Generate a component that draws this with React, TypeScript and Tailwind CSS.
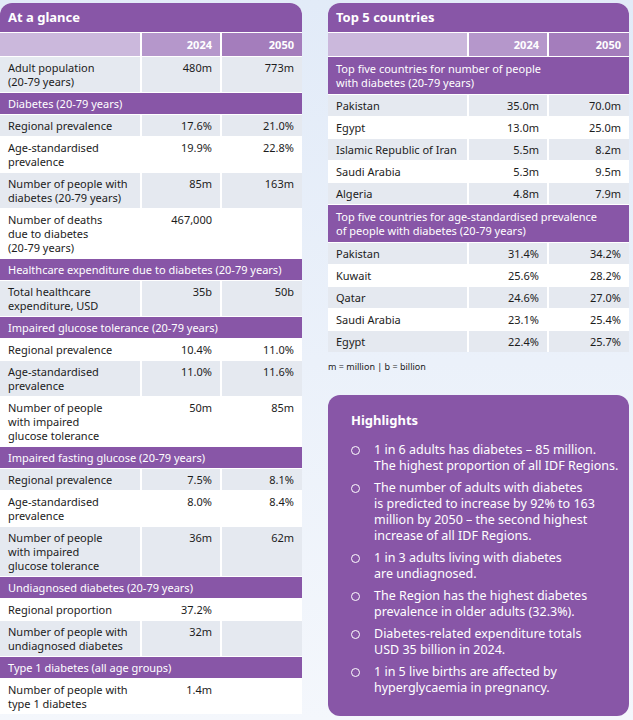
import React from 'react'

type Row = { label: string[]; a?: string; b?: string; shade: boolean }
type Block = { title: string[]; rows: Row[] }

const glance: { top: Row; blocks: Block[] } = {
  top: { label: ['Adult population', '(20-79 years)'], a: '480m', b: '773m', shade: true },
  blocks: [
    {
      title: ['Diabetes (20-79 years)'],
      rows: [
        { label: ['Regional prevalence'], a: '17.6%', b: '21.0%', shade: true },
        { label: ['Age-standardised', 'prevalence'], a: '19.9%', b: '22.8%', shade: false },
        { label: ['Number of people with', 'diabetes (20-79 years)'], a: '85m', b: '163m', shade: true },
        { label: ['Number of deaths', 'due to diabetes', '(20-79 years)'], a: '467,000', shade: false },
      ],
    },
    {
      title: ['Healthcare expenditure due to diabetes (20-79 years)'],
      rows: [{ label: ['Total healthcare', 'expenditure, USD'], a: '35b', b: '50b', shade: true }],
    },
    {
      title: ['Impaired glucose tolerance (20-79 years)'],
      rows: [
        { label: ['Regional prevalence'], a: '10.4%', b: '11.0%', shade: false },
        { label: ['Age-standardised', 'prevalence'], a: '11.0%', b: '11.6%', shade: true },
        { label: ['Number of people', 'with impaired', 'glucose tolerance'], a: '50m', b: '85m', shade: false },
      ],
    },
    {
      title: ['Impaired fasting glucose (20-79 years)'],
      rows: [
        { label: ['Regional prevalence'], a: '7.5%', b: '8.1%', shade: true },
        { label: ['Age-standardised', 'prevalence'], a: '8.0%', b: '8.4%', shade: false },
        { label: ['Number of people', 'with impaired', 'glucose tolerance'], a: '36m', b: '62m', shade: true },
      ],
    },
    {
      title: ['Undiagnosed diabetes (20-79 years)'],
      rows: [
        { label: ['Regional proportion'], a: '37.2%', shade: false },
        { label: ['Number of people with', 'undiagnosed diabetes'], a: '32m', shade: true },
      ],
    },
    {
      title: ['Type 1 diabetes (all age groups)'],
      rows: [{ label: ['Number of people with', 'type 1 diabetes'], a: '1.4m', shade: false }],
    },
  ],
}

const countries: Block[] = [
  {
    title: ['Top five countries for number of people', 'with diabetes (20-79 years)'],
    rows: [
      { label: ['Pakistan'], a: '35.0m', b: '70.0m', shade: true },
      { label: ['Egypt'], a: '13.0m', b: '25.0m', shade: false },
      { label: ['Islamic Republic of Iran'], a: '5.5m', b: '8.2m', shade: true },
      { label: ['Saudi Arabia'], a: '5.3m', b: '9.5m', shade: false },
      { label: ['Algeria'], a: '4.8m', b: '7.9m', shade: true },
    ],
  },
  {
    title: ['Top five countries for age-standardised prevalence', 'of people with diabetes (20-79 years)'],
    rows: [
      { label: ['Pakistan'], a: '31.4%', b: '34.2%', shade: true },
      { label: ['Kuwait'], a: '25.6%', b: '28.2%', shade: false },
      { label: ['Qatar'], a: '24.6%', b: '27.0%', shade: true },
      { label: ['Saudi Arabia'], a: '23.1%', b: '25.4%', shade: false },
      { label: ['Egypt'], a: '22.4%', b: '25.7%', shade: true },
    ],
  },
]

const highlights = [
  ['1 in 6 adults has diabetes – 85 million.', 'The highest proportion of all IDF Regions.'],
  [
    'The number of adults with diabetes',
    'is predicted to increase by 92% to 163',
    'million by 2050 – the second highest',
    'increase of all IDF Regions.',
  ],
  ['1 in 3 adults living with diabetes', 'are undiagnosed.'],
  ['The Region has the highest diabetes', 'prevalence in older adults (32.3%).'],
  ['Diabetes-related expenditure totals', 'USD 35 billion in 2024.'],
  ['1 in 5 live births are affected by', 'hyperglycaemia in pregnancy.'],
]

function Lines({ lines }: { lines: string[] }) {
  return (
    <>
      {lines.map((l, i) => (
        <div key={i} className="whitespace-nowrap">
          {l}
        </div>
      ))}
    </>
  )
}

function DataRow({ row, cols }: { row: Row; cols: string }) {
  const bg = row.shade ? 'bg-[#e5e9f0]' : 'bg-white'
  return (
    <div className={`grid ${cols} gap-x-[2px] mt-[1px]`}>
      <div className={`${bg} px-2 pt-[4px] pb-[3px]`}>
        <Lines lines={row.label} />
      </div>
      <div className={`${bg} px-2 pt-[4px] pb-[3px] text-right`}>{row.a}</div>
      <div className={`${bg} px-2 pt-[4px] pb-[3px] text-right`}>{row.b}</div>
    </div>
  )
}

function SectionTitle({ lines }: { lines: string[] }) {
  // two-line titles sit in a slightly taller band
  const pad = lines.length > 1 ? 'pt-[5px] pb-[4px]' : 'pt-[4px] pb-[3px]'
  return (
    <div className={`bg-[#8856a7] text-white px-2 ${pad} mt-[1px]`}>
      <Lines lines={lines} />
    </div>
  )
}

function Panel({ title, cols, children }: { title: string; cols: string; children: React.ReactNode }) {
  return (
    <div className="bg-white rounded-t-[12px] overflow-hidden shrink-0">
      <div className="bg-[#8856a7] text-white font-bold text-[13px] leading-[18px] px-2 pt-[5px] pb-[6px]">
        {title}
      </div>
      <div className={`grid ${cols} gap-x-[2px] mt-[1px] font-bold text-white`}>
        <div className="bg-[#cbb8dc] h-[23px]" />
        <div className="bg-[#b597cb] px-2 text-right leading-[23px]">2024</div>
        <div className="bg-[#a47dbc] px-2 text-right leading-[23px]">2050</div>
      </div>
      {children}
    </div>
  )
}

export default function App() {
  const leftCols = 'grid-cols-[140px_78px_80px]'
  const rightCols = 'grid-cols-[139px_78px_80px]'
  return (
    <div
      className="w-[633px] h-[720px] overflow-hidden bg-gradient-to-b from-[#e2ebf8] to-[#f4f7fc] flex items-start gap-[26px] pt-[3px] text-[11px] leading-[14px] text-[#1c1c1c]"
      style={{ fontFamily: '"Noto Sans", "Open Sans", sans-serif' }}
    >
      {/* At a glance */}
      <div className="w-[302px] shrink-0">
        <Panel title="At a glance" cols={leftCols}>
          <DataRow row={glance.top} cols={leftCols} />
          {glance.blocks.map((b, i) => (
            <div key={i}>
              <SectionTitle lines={b.title} />
              {b.rows.map((r, j) => (
                <DataRow key={j} row={r} cols={leftCols} />
              ))}
            </div>
          ))}
        </Panel>
      </div>

      {/* Right column */}
      <div className="w-[301px] shrink-0 flex flex-col">
        <Panel title="Top 5 countries" cols={rightCols}>
          {countries.map((b, i) => (
            <div key={i}>
              <SectionTitle lines={b.title} />
              {b.rows.map((r, j) => (
                <DataRow key={j} row={r} cols={rightCols} />
              ))}
            </div>
          ))}
        </Panel>
        <div className="text-[9px] leading-[12px] mt-[9px] shrink-0">m = million | b = billion</div>

        <div className="shrink-0 mt-[22px] bg-[#8856a7] rounded-[12px] text-white pl-[23px] pr-2 pt-[16px] pb-[20px] text-[12.5px] leading-[16px]">
          <div className="font-bold text-[13px] leading-[18px] mb-[13px]">Highlights</div>
          <div className="flex flex-col gap-[6px]">
            {highlights.map((h, i) => (
              <div key={i} className="flex gap-[14px]">
                <div className="mt-[4px] w-[9px] h-[9px] rounded-full border-[1.6px] border-white shrink-0" />
                <div>
                  <Lines lines={h} />
                </div>
              </div>
            ))}
          </div>
        </div>
      </div>
    </div>
  )
}
